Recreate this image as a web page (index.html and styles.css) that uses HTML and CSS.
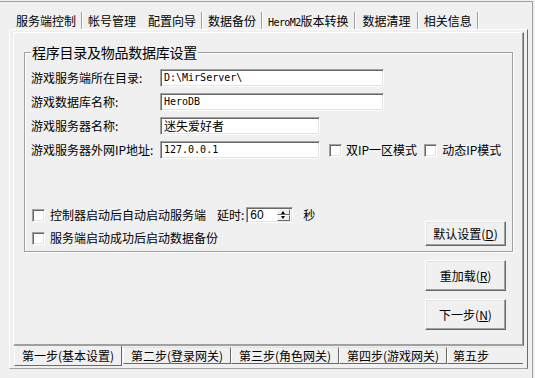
FILE: index.html
```html
<!DOCTYPE html>
<html>
<head>
<meta charset="utf-8">
<link rel="stylesheet" href="styles.css">
</head>
<body>
<div class="window">
  <div class="toptabs">
    <span class="ttab">服务端控制</span>
    <span class="ttab nosep">帐号管理</span>
    <span class="ttab">配置向导</span>
    <span class="ttab">数据备份</span>
    <span class="ttab"><span class="lat">HeroM2</span>版本转换</span>
    <span class="ttab wide">数据清理</span>
    <span class="ttab">相关信息</span>
  </div>
  <div class="outer">
    <div class="inner">
      <div class="group">
        <div class="gtitle">程序目录及物品数据库设置</div>
        <div class="row"><span class="lbl">游戏服务端所在目录:</span><span class="edit long mono">D:\MirServer\</span></div>
        <div class="row"><span class="lbl">游戏数据库名称:</span><span class="edit long mono">HeroDB</span></div>
        <div class="row"><span class="lbl">游戏服务器名称:</span><span class="edit short">迷失爱好者</span></div>
        <div class="row"><span class="lbl">游戏服务器外网IP地址:</span><span class="edit short mono">127.0.0.1</span>
          <span class="cb ipcb"></span><span class="cbtext">双IP一区模式</span>
          <span class="cb ipcb2"></span><span class="cbtext">动态IP模式</span>
        </div>
        <div class="lower">
          <div class="checks">
            <div class="crow"><span class="cb"></span><span class="cbtext">控制器启动后自动启动服务端</span>
              <span class="delay">延时:</span>
              <span class="spin"><span class="spinval">60</span><span class="spinbtns"><span class="sb up"></span><span class="sb down"></span></span></span>
              <span class="sec">秒</span>
            </div>
            <div class="crow"><span class="cb"></span><span class="cbtext">服务端启动成功后启动数据备份</span></div>
          </div>
          <button class="btn small">默认设置(<u>D</u>)</button>
        </div>
      </div>
      <div class="btns">
        <button class="btn big">重加载(<u>R</u>)</button>
        <button class="btn big">下一步(<u>N</u>)</button>
      </div>
    </div>
    <div class="btabs">
      <span class="btab sel">第一步(基本设置)</span>
      <span class="btab">第二步(登录网关)</span>
      <span class="btab">第三步(角色网关)</span>
      <span class="btab">第四步(游戏网关)</span>
      <span class="btab last">第五步</span>
    </div>
  </div>
</div>
</body>
</html>
```
FILE: styles.css
```css
* { box-sizing: border-box; }
body {
  margin: 0;
  width: 535px;
  height: 378px;
  overflow: hidden;
  background: #f0f0f0;
  font: 12px/16px "Noto Sans CJK SC", sans-serif;
  color: #000;
}
.window {
  margin-top: 1px;
  width: 533px;
  height: 377px;
  border-top: 1px solid #a0a0a0;
  border-right: 1px solid #a0a0a0;
}
.toptabs {
  display: flex;
  margin-top: 10px;
  height: 17px;
  padding-left: 11px;
}
.ttab {
  padding: 0 5px;
  line-height: 17px;
  border-right: 1px solid #a0a0a0;
  box-shadow: 1px 0 0 #fff;
  margin-right: 1px;
  white-space: nowrap;
}
.ttab.nosep { border-right-color: transparent; box-shadow: none; }
.ttab.wide { padding: 0 6px 0 7px; }
.lat { font-family: "DejaVu Sans Mono", monospace; font-size: 10px; letter-spacing: -0.6px; }
.outer {
  margin-left: 9px;
  width: 519px;
  height: 340px;
  border: 1px solid;
  border-color: #fff #696969 #a0a0a0 #fff;
  padding: 2px 0 0 3px;
}
.inner {
  width: 511px;
  height: 314px;
  border: 1px solid;
  border-color: #fff #696969 #a0a0a0 #fff;
  box-shadow: inset -1px -1px 0 #a0a0a0;
  padding: 19px 0 0 10px;
}
.group {
  position: relative;
  width: 489px;
  height: 200px;
  border: 1px solid #a0a0a0;
  box-shadow: inset 1px 1px 0 #fff, 1px 1px 0 #fff;
  padding: 16px 0 5px 6px;
  display: flex;
  flex-direction: column;
}
.gtitle {
  position: absolute;
  left: 6px;
  top: -9px;
  padding: 0 1px;
  background: #f0f0f0;
  font-size: 14px;
  line-height: 16px;
  letter-spacing: -0.25px;
}
.row {
  display: flex;
  align-items: center;
  height: 18px;
  margin-bottom: 6px;
}
.lbl { width: 129px; white-space: nowrap; }
.edit {
  height: 18px;
  background: #fff;
  border: 1px solid;
  border-color: #a0a0a0 #fff #fff #a0a0a0;
  box-shadow: inset 1px 1px 0 #696969, inset -1px -1px 0 #e3e3e3;
  padding: 0 0 0 3px;
  line-height: 16px;
  white-space: nowrap;
}
.edit.long { width: 224px; }
.edit.short { width: 160px; }
.mono { font-family: "DejaVu Sans Mono", monospace; font-size: 10px; }
.cb {
  display: inline-block;
  width: 13px;
  height: 13px;
  flex: none;
  background: #fff;
  border: 1px solid;
  border-color: #a0a0a0 #fff #fff #a0a0a0;
  box-shadow: inset 1px 1px 0 #696969, inset -1px -1px 0 #e3e3e3;
}
.ipcb { margin-left: 9px; }
.ipcb2 { margin-left: 7px; }
.cbtext { margin-left: 4px; white-space: nowrap; }
.ipcb2 + .cbtext { margin-left: 5px; }
.lower {
  margin-top: auto;
  display: flex;
  align-items: flex-end;
  justify-content: space-between;
  padding-right: 6px;
}
.checks { padding-left: 1px; }
.crow {
  display: flex;
  align-items: center;
  height: 16px;
}
.crow + .crow { margin-top: 7px; }
.crow .cbtext { margin-left: 5px; }
.delay { margin-left: 11px; }
.spin {
  display: flex;
  align-items: center;
  margin-left: 2px;
  width: 47px;
  height: 16px;
  background: #fff;
  border: 1px solid;
  border-color: #a0a0a0 #fff #fff #a0a0a0;
  box-shadow: inset 1px 1px 0 #696969, inset -1px -1px 0 #e3e3e3;
  padding: 1px 2px 1px 3px;
}
.spinval { flex: 1; font: 12px/14px "Liberation Sans", sans-serif; }
.spinbtns { display: flex; flex-direction: column; width: 13px; height: 12px; }
.sb {
  position: relative;
  flex: 1;
  background: #f0f0f0;
  border: 1px solid;
  border-color: #fff #696969 #696969 #fff;
}
.sb::after {
  content: "";
  position: absolute;
  left: 3px;
  border-left: 2.5px solid transparent;
  border-right: 2.5px solid transparent;
}
.sb.up::after { top: 1px; border-bottom: 3px solid #000; }
.sb.down::after { top: 0px; border-top: 3px solid #000; }
.sec { margin-left: 10px; }
.btn {
  display: block;
  width: 81px;
  background: #f0f0f0;
  border: 1px solid;
  border-color: #fff #696969 #696969 #fff;
  box-shadow: inset -1px -1px 0 #a0a0a0, inset 1px 1px 0 #e3e3e3;
  font: 12px/16px "Noto Sans CJK SC", sans-serif;
  color: #000;
  padding: 0;
  margin: 0;
}
.btn.small { height: 25px; }
.btns {
  display: flex;
  flex-direction: column;
  align-items: flex-end;
  gap: 8px;
  padding-right: 17px;
  margin-top: 8px;
}
.btn.big { height: 31px; }
.btabs {
  display: flex;
  padding-left: 1px;
  height: 22px;
  overflow: hidden;
}
.btab {
  height: 17px;
  margin-top: 1px;
  width: 108px;
  text-align: center;
  line-height: 15px;
  border: 1px solid;
  border-color: #e3e3e3 #696969 #696969 #fff;
  white-space: nowrap;
  overflow: hidden;
}
.btab.sel {
  height: 21px;
  margin-top: -1px;
  border-top: none;
  line-height: 22px;
  margin-right: 1px;
}
.btab.last { width: 76px; text-align: left; padding-left: 5px; border-right: none; }
```
